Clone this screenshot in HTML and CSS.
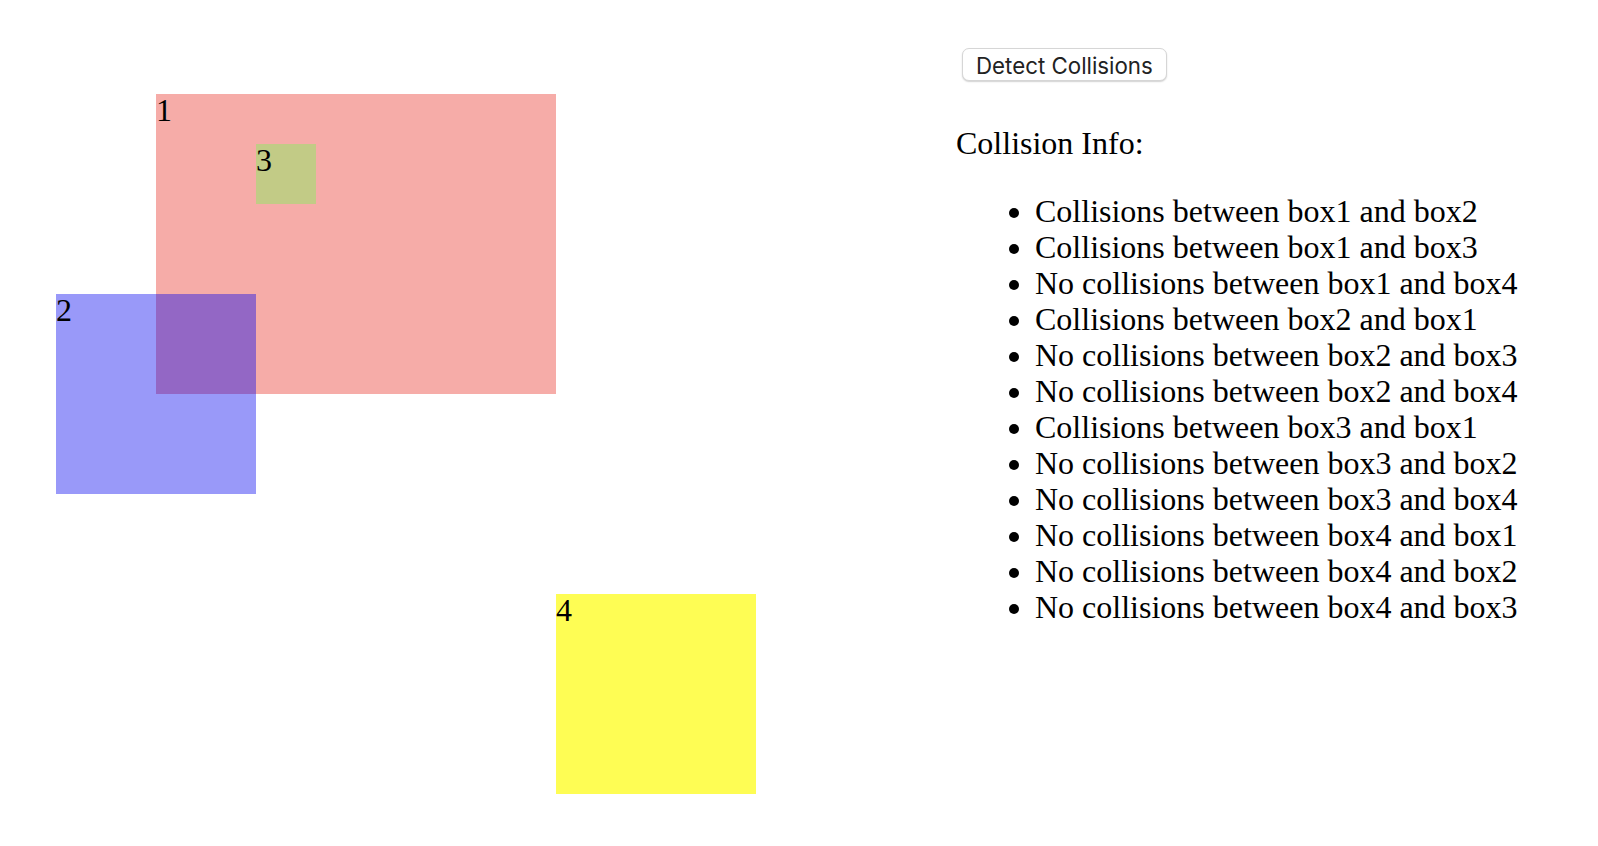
FILE: index.html
```html
<!DOCTYPE html>
<html lang="en">
<head>
<meta charset="utf-8">
<title>Collision Detection</title>
<link rel="stylesheet" href="styles.css">
</head>
<body>
<div class="app">
  <div class="canvas">
    <div class="box box1">1</div>
    <div class="box box2">2</div>
    <div class="box box3">3</div>
    <div class="box box4">4</div>
  </div>
  <div class="panel">
    <button class="detect-btn" type="button">Detect Collisions</button>
    <div class="info-title">Collision Info:</div>
    <ul class="info-list">
      <li>Collisions between box1 and box2</li>
      <li>Collisions between box1 and box3</li>
      <li>No collisions between box1 and box4</li>
      <li>Collisions between box2 and box1</li>
      <li>No collisions between box2 and box3</li>
      <li>No collisions between box2 and box4</li>
      <li>Collisions between box3 and box1</li>
      <li>No collisions between box3 and box2</li>
      <li>No collisions between box3 and box4</li>
      <li>No collisions between box4 and box1</li>
      <li>No collisions between box4 and box2</li>
      <li>No collisions between box4 and box3</li>
    </ul>
  </div>
</div>
</body>
</html>
```

FILE: styles.css
```css
html, body {
  margin: 0;
  padding: 0;
  background: #ffffff;
}

body {
  font-family: "Liberation Serif", "Times New Roman", serif;
  font-size: 32px;
  color: #000000;
}

.app {
  display: flex;
  align-items: flex-start;
}

.canvas {
  position: relative;
  flex: none;
  width: 956px;
  height: 846px;
}

.box {
  position: absolute;
  font-family: "Liberation Serif", "Times New Roman", serif;
  font-size: 32px;
  line-height: 32px;
  color: #000000;
}

.box1 {
  left: 156px;
  top: 94px;
  width: 400px;
  height: 300px;
  background: #f6aca8;
}

.box2 {
  left: 56px;
  top: 294px;
  width: 200px;
  height: 200px;
  background: rgba(0, 0, 240, 0.4);
}

.box3 {
  left: 256px;
  top: 144px;
  width: 60px;
  height: 60px;
  background: #c2cb86;
}

.box4 {
  left: 556px;
  top: 594px;
  width: 200px;
  height: 200px;
  background: #fefd54;
}

.panel {
  flex: 1;
  padding-top: 48px;
}

.detect-btn {
  display: block;
  margin: 0 0 0 6px;
  height: 33px;
  padding: 1px 13px 0;
  background: #ffffff;
  border: 1px solid #d6d6d6;
  border-radius: 7px;
  box-shadow: 0 1px 1.5px rgba(0, 0, 0, 0.18);
  font-family: "Inter", "Liberation Sans", sans-serif;
  font-size: 22.3px;
  color: #222222;
  cursor: pointer;
}

.info-title {
  margin-top: 44px;
  line-height: 36px;
}

.info-list {
  margin: 32px 0 0 0;
  padding-left: 79px;
  line-height: 36px;
}
```
